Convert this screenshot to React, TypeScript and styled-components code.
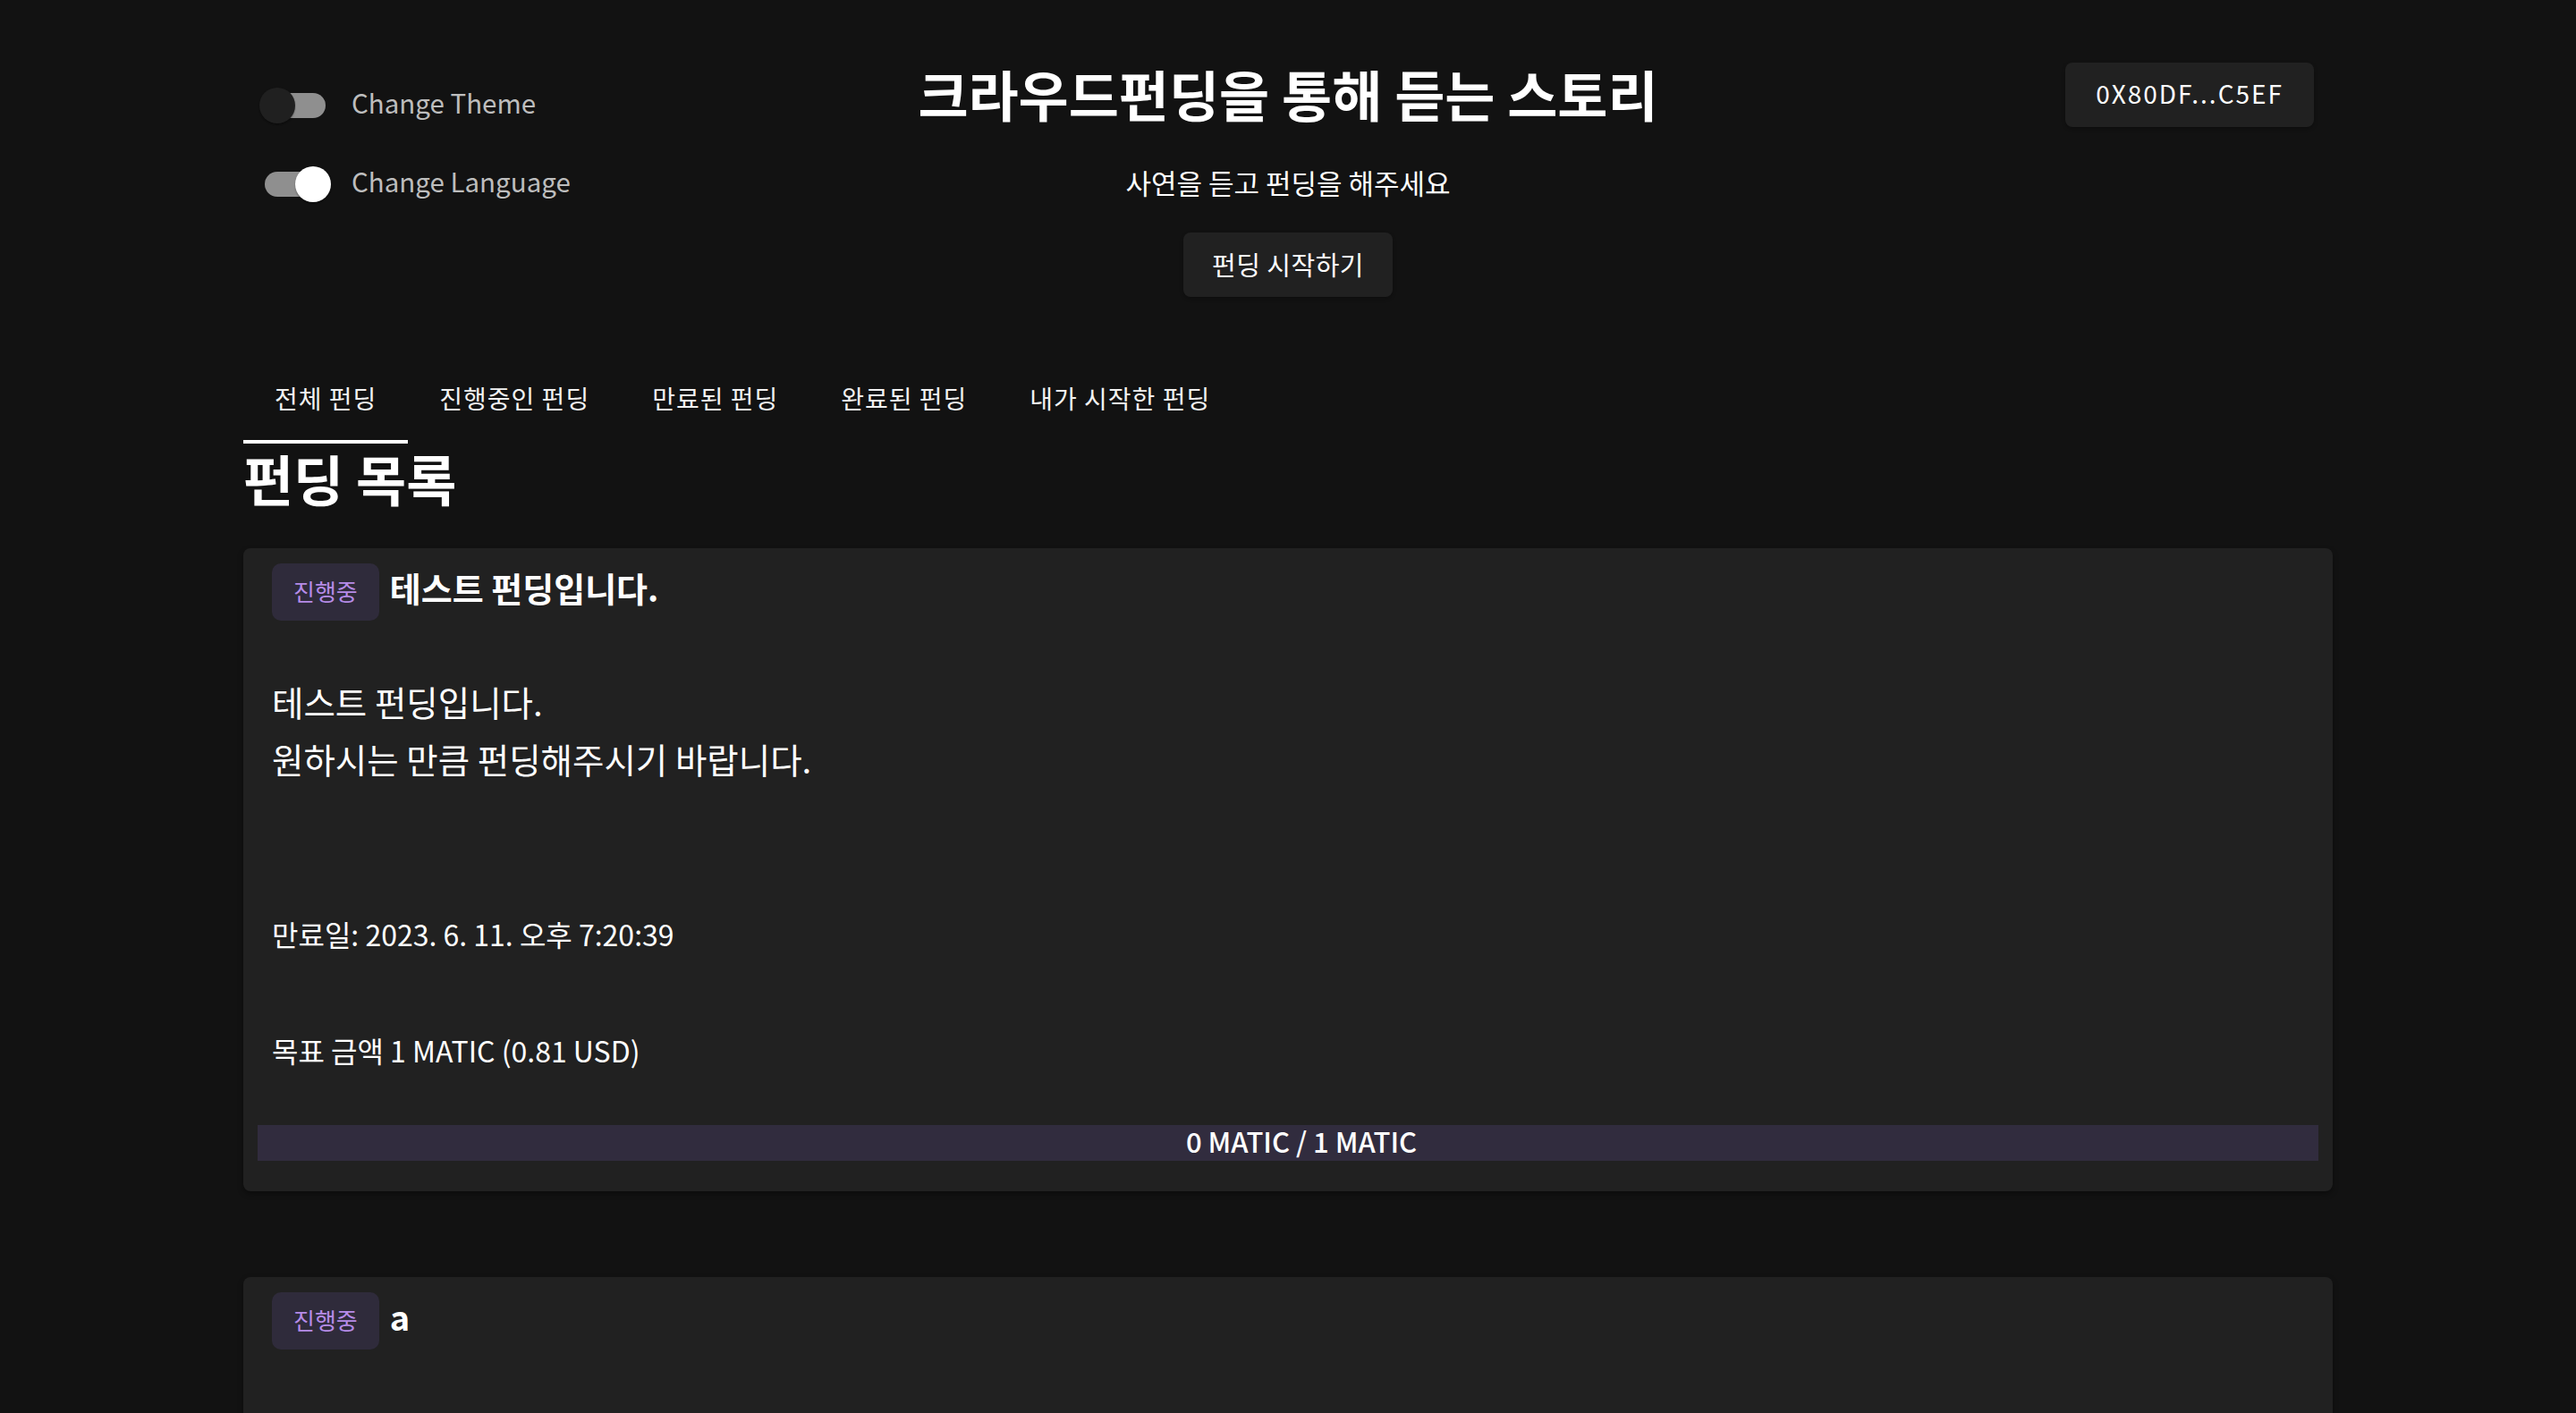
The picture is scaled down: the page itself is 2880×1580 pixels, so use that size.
import { FC, useState } from 'react';
import styled, { createGlobalStyle } from 'styled-components';

const GlobalStyle = createGlobalStyle`
  * { box-sizing: border-box; }
  html, body {
    margin: 0;
    padding: 0;
    background: #121212;
  }
  body {
    font-family: "Noto Sans CJK KR", "Noto Sans", sans-serif;
    color: #fff;
  }
`;

const Page = styled.div`
  min-height: 1580px;
  background: #121212;
  display: flex;
  justify-content: center;
`;

const Container = styled.div`
  width: 2336px;
  padding-top: 70px;
`;

const Header = styled.header`
  display: grid;
  grid-template-columns: 1fr auto 1fr;
  align-items: start;
`;

const ToggleColumn = styled.div`
  display: flex;
  flex-direction: column;
  gap: 12px;
  padding-top: 10px;
`;

const ToggleRow = styled.label`
  display: flex;
  align-items: center;
  cursor: pointer;
`;

const SwitchRoot = styled.span`
  position: relative;
  display: flex;
  align-items: center;
  width: 116px;
  height: 76px;
  padding: 0 24px;
  flex-shrink: 0;
`;

const Track = styled.span`
  width: 68px;
  height: 28px;
  border-radius: 14px;
  background: #8f8f8f;
`;

const Thumb = styled.span<{ $on: boolean }>`
  position: absolute;
  top: 18px;
  left: ${(p) => (p.$on ? '58px' : '18px')};
  width: 40px;
  height: 40px;
  border-radius: 50%;
  background: ${(p) => (p.$on ? '#ffffff' : '#202020')};
  box-shadow: 0 2px 2px -1px rgba(0, 0, 0, 0.3), 0 1px 2px rgba(0, 0, 0, 0.25);
  transition: left 0.15s ease;
`;

const ToggleLabel = styled.span`
  margin-left: 5px;
  padding-bottom: 9px;
  font-size: 29.5px;
  line-height: 44px;
  color: #bdbdbd;
`;

const CenterColumn = styled.div`
  display: flex;
  flex-direction: column;
  align-items: center;
`;

const Title = styled.h1`
  margin: 0;
  padding-bottom: 6px;
  font-size: 61px;
  line-height: 70px;
  font-weight: 700;
  color: #fff;
`;

const Subtitle = styled.p`
  margin: 34px 0 0;
  padding-bottom: 4px;
  font-size: 31px;
  line-height: 48px;
  color: #fff;
`;

const DarkButton = styled.button`
  height: 72px;
  padding: 0 32px;
  border: none;
  border-radius: 8px;
  background: #212121;
  color: #fff;
  font-family: inherit;
  font-size: 28px;
  cursor: pointer;
  box-shadow: 0 2px 4px rgba(0, 0, 0, 0.25);
`;

const StartButton = styled(DarkButton)`
  margin-top: 28px;
  padding-bottom: 3px;
  font-size: 29px;
  letter-spacing: 0.5px;
`;

const WalletButton = styled(DarkButton)`
  justify-self: end;
  margin-right: 21px;
  padding: 0 34px 4px;
  letter-spacing: 2px;
  text-transform: uppercase;
`;

const TabList = styled.nav`
  display: flex;
  margin-top: 68px;
  height: 96px;
`;

const Tab = styled.button<{ $active: boolean }>`
  display: flex;
  align-items: center;
  padding: 0 35px 2px;
  border: none;
  border-bottom: 4px solid ${(p) => (p.$active ? '#ffffff' : 'transparent')};
  background: none;
  color: #f2f2f2;
  font-family: inherit;
  font-size: 28px;
  letter-spacing: 1px;
  cursor: pointer;
`;

const SectionTitle = styled.h2`
  margin: 4px 0 0;
  padding-bottom: 6px;
  font-size: 61px;
  line-height: 70px;
  font-weight: 700;
`;

const CardList = styled.div`
  display: flex;
  flex-direction: column;
  gap: 96px;
  margin-top: 37px;
`;

const Card = styled.article`
  background: #212121;
  border-radius: 8px;
  padding: 17px 16px 34px;
  box-shadow: 0 3px 6px rgba(0, 0, 0, 0.35);
`;

const CardHeader = styled.div`
  display: flex;
  align-items: center;
  gap: 12px;
  padding-left: 16px;
`;

const StatusChip = styled.span`
  display: flex;
  align-items: center;
  height: 64px;
  padding: 0 24px 3px;
  border-radius: 10px;
  background: #2f2b3b;
  color: #b68be8;
  font-size: 26px;
`;

const CardTitle = styled.h3`
  margin: 0;
  padding-bottom: 10px;
  font-size: 38px;
  line-height: 54px;
  font-weight: 700;
`;

const Description = styled.p`
  margin: 58px 0 0;
  padding-left: 16px;
  font-size: 38.5px;
  line-height: 64px;
  white-space: pre-line;
`;

const InfoLine = styled.p<{ $gap: number }>`
  margin: ${(p) => p.$gap}px 0 0;
  padding-left: 16px;
  font-size: 32px;
  line-height: 45px;
`;

const ProgressBar = styled.div`
  margin-top: 61px;
  height: 40px;
  background: #312c3e;
  text-align: center;
  padding: 0 0 4px 30px;
  font-size: 31px;
  line-height: 36px;
  font-weight: 500;
`;

interface IFunding {
  id: number;
  title: string;
  description: string;
  deadline: string;
  goal: number;
  usd: string;
  raised: number;
}

const fundings: IFunding[] = [
  {
    id: 1,
    title: '테스트 펀딩입니다.',
    description: '테스트 펀딩입니다.\n원하시는 만큼 펀딩해주시기 바랍니다.',
    deadline: '2023. 6. 11. 오후 7:20:39',
    goal: 1,
    usd: '0.81',
    raised: 0,
  },
  {
    id: 2,
    title: 'a',
    description: 'a',
    deadline: '2023. 6. 12. 오후 3:10:05',
    goal: 1,
    usd: '0.81',
    raised: 0,
  },
];

const tabs = ['전체 펀딩', '진행중인 펀딩', '만료된 펀딩', '완료된 펀딩', '내가 시작한 펀딩'];

const Toggle: FC<{ label: string; checked: boolean; onChange: () => void }> = ({ label, checked, onChange }) => (
  <ToggleRow onClick={onChange}>
    <SwitchRoot>
      <Track />
      <Thumb $on={checked} />
    </SwitchRoot>
    <ToggleLabel>{label}</ToggleLabel>
  </ToggleRow>
);

const FundingCard: FC<{ funding: IFunding }> = ({ funding }) => (
  <Card>
    <CardHeader>
      <StatusChip>진행중</StatusChip>
      <CardTitle>{funding.title}</CardTitle>
    </CardHeader>
    <Description>{funding.description}</Description>
    <InfoLine $gap={142}>만료일: {funding.deadline}</InfoLine>
    <InfoLine $gap={85}>
      목표 금액 {funding.goal} MATIC ({funding.usd} USD)
    </InfoLine>
    <ProgressBar>
      {funding.raised} MATIC / {funding.goal} MATIC
    </ProgressBar>
  </Card>
);

const App: FC = () => {
  const [darkTheme, setDarkTheme] = useState(false);
  const [korean, setKorean] = useState(true);
  const [activeTab, setActiveTab] = useState(0);

  return (
    <Page>
      <GlobalStyle />
      <Container>
        <Header>
          <ToggleColumn>
            <Toggle label="Change Theme" checked={darkTheme} onChange={() => setDarkTheme(!darkTheme)} />
            <Toggle label="Change Language" checked={korean} onChange={() => setKorean(!korean)} />
          </ToggleColumn>
          <CenterColumn>
            <Title>크라우드펀딩을 통해 듣는 스토리</Title>
            <Subtitle>사연을 듣고 펀딩을 해주세요</Subtitle>
            <StartButton>펀딩 시작하기</StartButton>
          </CenterColumn>
          <WalletButton>0x80df...c5ef</WalletButton>
        </Header>

        <TabList>
          {tabs.map((tab, i) => (
            <Tab key={tab} $active={i === activeTab} onClick={() => setActiveTab(i)}>
              {tab}
            </Tab>
          ))}
        </TabList>

        <SectionTitle>펀딩 목록</SectionTitle>

        <CardList>
          {fundings.map((f) => (
            <FundingCard key={f.id} funding={f} />
          ))}
        </CardList>
      </Container>
    </Page>
  );
};

export default App;
